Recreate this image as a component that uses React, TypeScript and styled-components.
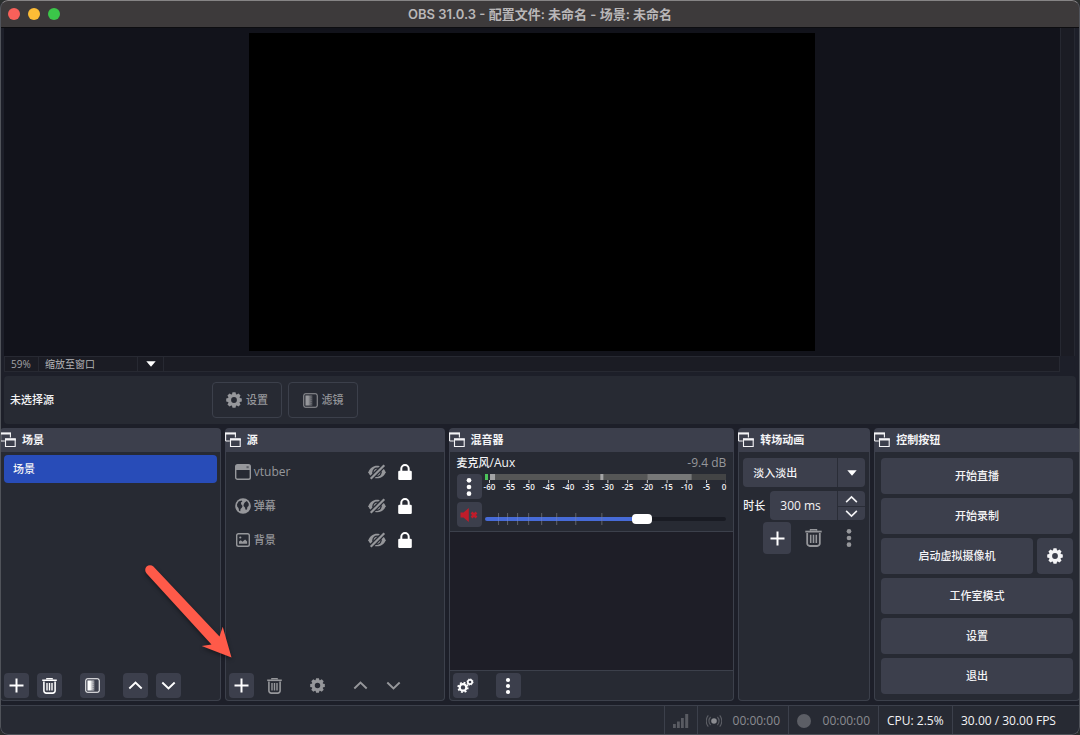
import React, { useState } from "react";
import styled, { createGlobalStyle, css } from "styled-components";

const color = {
  panel: "#272a33",
  deep: "#1d1f29",
  control: "#3c3f4c",
  line: "#3c404b",
  text: "#f4f4f6",
  muted: "#96979b",
  accent: "#284cb8",
};

const GlobalStyle = createGlobalStyle`
  * { box-sizing: border-box; }
  body {
    margin: 0;
    background: #2b2f2e;
    color: ${color.text};
    font-family: "Open Sans", "Noto Sans CJK SC", sans-serif;
    font-size: 12px;
    line-height: 16px;
  }
  button, input, select { font: inherit; color: inherit; margin: 0; }
  svg { display: block; flex: none; }
`;

/* ---------- icons ---------- */

const Gear = ({ size = 16 }: { size?: number }) => (
  <svg width={size} height={size} viewBox="0 0 16 16" aria-hidden="true">
    <circle cx="8" cy="8" r="4.5" fill="none" stroke="currentColor" strokeWidth="3.2" />
    {[0, 45, 90, 135, 180, 225, 270, 315].map((angle) => (
      <path key={angle} d="M5.8 3 6.5.2h3L10.200 3z" fill="currentColor" transform={`rotate(${angle} 8 8)`} />
    ))}
  </svg>
);

const Gears = () => (
  <svg width="17" height="16" viewBox="0 0 17 16" aria-hidden="true">
    <g fill="none" stroke="currentColor">
      <circle cx="6" cy="9.4" r="3.3" strokeWidth="2.2" />
      <circle cx="6" cy="9.4" r="4.8" strokeWidth="1.7" strokeDasharray="1.9 1.87" />
      <circle cx="13" cy="4" r="2.2" strokeWidth="1.7" />
      <circle cx="13" cy="4" r="3.1" strokeWidth="0.9" strokeDasharray="1.22 1.22" />
    </g>
  </svg>
);

const Plus = () => (
  <svg width="15" height="15" viewBox="0 0 15 15" aria-hidden="true">
    <path d="M7.500.500v14M.500 7.500h14" fill="none" stroke="currentColor" strokeWidth="2" />
  </svg>
);

const Trash = ({ size = 15 }: { size?: number }) => (
  <svg width={size} height={size + 1} viewBox="0 0 15 16" aria-hidden="true">
    <g fill="none" stroke="currentColor">
      <path d="M.2 2.300h14.600" strokeWidth="1.600" />
      <path d="M4.800 1.500V.7h5.400v.8" strokeWidth="1.200" />
      <path d="M1.900 3.600v9.200a2.300 2.300 0 0 0 2.300 2.300h6.600a2.300 2.300 0 0 0 2.300-2.300V3.600" strokeWidth="1.600" />
      <path d="M5 5v7.400M7.500 5v7.400M10 5v7.400" strokeWidth="1.400" />
    </g>
  </svg>
);

const FilterIcon = ({ id }: { id: string }) => (
  <svg width="15" height="15" viewBox="0 0 16 16" aria-hidden="true">
    <defs>
      <linearGradient id={id}>
        <stop offset="0.35" stopColor="currentColor" />
        <stop offset="1" stopColor="currentColor" stopOpacity="0" />
      </linearGradient>
    </defs>
    <rect x="0.8" y="0.8" width="14.4" height="14.4" rx="2" fill="none" stroke="currentColor" strokeWidth="1.1" />
    <rect x="2.6" y="2.6" width="8.4" height="10.8" fill={`url(#${id})`} />
    <path d="M8.6 2.6v10.8" stroke="currentColor" strokeDasharray="1 1" strokeOpacity="0.6" />
  </svg>
);

const Chevron = ({ down, size = 16 }: { down?: boolean; size?: number }) => (
  <svg width={size} height={size} viewBox="0 0 16 16" aria-hidden="true">
    <path d={down ? "M1.4 4.8 8 11.2l6.6-6.4" : "M1.4 11.2 8 4.8l6.6 6.4"} fill="none" stroke="currentColor" strokeWidth="2" />
  </svg>
);

const Dots = ({ size = 18 }: { size?: number }) => (
  <svg width={size} height={size} viewBox="0 0 18 18" aria-hidden="true" fill="currentColor">
    <circle cx="9" cy="3" r="2.1" />
    <circle cx="9" cy="9" r="2.1" />
    <circle cx="9" cy="15" r="2.1" />
  </svg>
);

const Caret = () => (
  <svg width="10" height="6" viewBox="0 0 10 6" aria-hidden="true">
    <path d="M.3.300h9.400L5 5.700z" fill="currentColor" />
  </svg>
);

const DockIcon = () => (
  <svg width="16" height="16" viewBox="0 0 16 16" aria-hidden="true">
    <path d="M.6 9V1.200h9.800v4.300M.6 9h4.200" fill="none" stroke="currentColor" strokeWidth="1.100" />
    <path d="M0 .4h11v2H0zM5 6.200h10.800v2.200H5z" fill="currentColor" />
    <path d="M5.500 7.200h9.700v7.300H5.500z" fill="none" stroke="currentColor" strokeWidth="1.100" />
  </svg>
);

const WindowIcon = () => (
  <svg width="16" height="16" viewBox="0 0 16 16" aria-hidden="true">
    <rect x="0.700" y="0.700" width="14.600" height="14.600" rx="1.800" fill="none" stroke="currentColor" strokeWidth="1.400" />
    <path d="M1 1h14v5H1z" fill="currentColor" />
    <path d="M11.500 2.200h2.200v2h-2.200z" fill="#5c5e65" />
  </svg>
);

const GlobeIcon = () => (
  <svg width="16" height="16" viewBox="0 0 16 16" aria-hidden="true">
    <circle cx="8" cy="8" r="7.800" fill="currentColor" />
    <path
      d="M2 6.200 3.600 3.400l2.900-1 .9 1.100-1.500 1.100.3 1.700 1.400 1.700-.8 1.800-1.300 1.200-.2 2.300-1.200-.5-.6-2.900-1.300-1.300zM9.900 4.200l2-1.100 1.900 2.700-.2 2.200-1.200 1.100-.4 2.300-1.400.3-.8-2.500-1.300-1.200.3-2z"
      fill={color.panel}
    />
  </svg>
);

const ImageIcon = () => (
  <svg width="16" height="16" viewBox="0 0 16 16" aria-hidden="true">
    <rect x="1.700" y="1.700" width="12.600" height="12.600" rx="1.800" fill="none" stroke="currentColor" strokeWidth="1.400" />
    <path d="M4 11.800V9.600l1.800-1.400 1.700 1.500 2.600-2.100 2 2v2.200z" fill="currentColor" />
    <circle cx="5.300" cy="5.500" r="1.100" fill="currentColor" />
  </svg>
);

const HiddenIcon = () => (
  <svg width="18" height="16" viewBox="0 0 18 16" aria-hidden="true">
    <path d="M.3 8.200C1.900 4 5.200 1.700 9 1.700s7.100 2.300 8.700 6.500c-1.600 4.100-4.900 6.100-8.700 6.100S1.900 12.300.3 8.200z" fill="currentColor" />
    <circle cx="9" cy="8.200" r="4.700" fill={color.panel} />
    <circle cx="9" cy="8.200" r="2.500" fill="none" stroke="currentColor" strokeWidth="1.700" />
    <path d="M1.600 15.800 16.600.800" stroke={color.panel} strokeWidth="4.800" />
    <path d="M2.700 14.800 16.300 1.200" stroke="currentColor" strokeWidth="2.200" />
  </svg>
);

const LockIcon = () => (
  <svg width="14" height="16" viewBox="0 0 14 16" aria-hidden="true">
    <path d="M3.300 8V4.700a3.700 3.700 0 0 1 7.400 0V8" fill="none" stroke="currentColor" strokeWidth="2" />
    <rect x="0.200" y="6.800" width="13.600" height="9.200" rx="1.200" fill="currentColor" />
  </svg>
);

const MutedIcon = () => (
  <svg width="18" height="16" viewBox="0 0 18 16" aria-hidden="true">
    <path d="M.5 5.600h3L8.800 1v14l-5.300-4.600h-3z" fill="#c01c2a" />
    <path d="m11.500 5.500 5 5M16.500 5.500l-5 5" stroke="#c01c2a" strokeWidth="2.600" />
  </svg>
);

const SignalIcon = () => (
  <svg width="16" height="16" viewBox="0 0 16 16" aria-hidden="true" fill="#595b62">
    <path d="M0 11h2.800v4H0zM4 8.500h2.800V15H4zM8 5h2.800v10H8zM12.200 1H15.200v14h-3z" />
  </svg>
);

const BroadcastIcon = () => (
  <svg width="16" height="14" viewBox="0 0 16 14" aria-hidden="true">
    <circle cx="8" cy="7" r="2.800" fill="#8b8c91" />
    <path d="M4.600 3a5.600 5.600 0 0 0 0 8M11.400 3a5.600 5.600 0 0 1 0 8M2.300 1.400a8.600 8.600 0 0 0 0 11.200M13.700 1.400a8.600 8.600 0 0 1 0 11.200" fill="none" stroke="#5c5e65" strokeWidth="1.100" />
  </svg>
);

/* ---------- window frame ---------- */

const Window = styled.div`
  position: relative;
  display: flex;
  flex-direction: column;
  min-height: 100vh;
  border-radius: 8px;
  overflow: hidden;
  background: ${color.deep};

  &::after {
    content: "";
    position: absolute;
    inset: 0;
    border: 1px solid #50535a;
    border-top-color: #868485;
    border-radius: 8px;
    pointer-events: none;
  }
`;

const TitleBar = styled.header`
  display: flex;
  align-items: center;
  height: 28px;
  padding: 0 8px;
  background: #3d3a3b;
  border-bottom: 1px solid #0d0d10;
`;

const Lights = styled.div`
  display: flex;
  flex: 1;
  gap: 8px;
`;

const Light = styled.button<{ $tint: string }>`
  width: 12px;
  height: 12px;
  padding: 0;
  border: 0;
  border-radius: 50%;
  background: ${(p) => p.$tint};
`;

const Title = styled.h1`
  margin: 0;
  font: 600 13px/16px Inter, "Noto Sans CJK SC", sans-serif;
  color: #b9b7b8;
`;

const Spacer = styled.div`
  flex: 1;
`;

/* ---------- preview ---------- */

const PreviewArea = styled.main`
  display: grid;
  grid-template-columns: 1fr 15px;
  grid-template-rows: 1fr 16px;
  flex: 1;
  min-height: 240px;
  padding: 0 5px 4px 4px;
`;

const Stage = styled.div`
  display: flex;
  justify-content: center;
  padding: 5px 0;
  background: #12131b;
`;

const Canvas = styled.div`
  height: 100%;
  aspect-ratio: 16 / 9;
  background: #000;
`;

const ScrollTrack = styled.div`
  grid-row: 1;
  grid-column: 2;
  background: #1b1c24;
  border-left: 1px solid #262831;
  border-right: 1px solid #262831;
`;

const ZoomBar = styled.div`
  display: flex;
  background: #1b1c24;
  border: 1px solid #272932;
  color: #a3a3a7;
`;

const ZoomValue = styled.span`
  width: 34px;
  padding-left: 6px;
  border-right: 1px solid #272932;
  font-size: 10px;
  line-height: 14px;
`;

const SelectBox = styled.div`
  position: relative;
  display: flex;

  svg {
    position: absolute;
    top: 50%;
    transform: translateY(-50%);
    color: #fff;
    pointer-events: none;
  }
`;

const ZoomSelectBox = styled(SelectBox)`
  width: 125px;
  border-right: 1px solid #272932;
  svg { right: 7px; }
`;

const ZoomSelect = styled.select`
  appearance: none;
  width: 100%;
  padding: 0 0 0 6px;
  border: 0;
  background: linear-gradient(#272932, #272932) right 25px top / 1px 100% no-repeat;
  font-size: 10px;
  line-height: 14px;
  color: #b4b4b7;
`;

const ContextBar = styled.section`
  display: flex;
  align-items: center;
  gap: 6px;
  height: 48px;
  margin: 0 4px 4px;
  padding: 0 6px;
  border-radius: 4px;
  background: ${color.panel};
`;

const ContextLabel = styled.span`
  width: 196px;
  font-size: 11px;
  font-weight: 500;
`;

const OutlineButton = styled.button`
  display: flex;
  align-items: center;
  justify-content: center;
  gap: 4px;
  width: 70px;
  height: 36px;
  padding: 0;
  border: 1px solid ${color.line};
  border-radius: 4px;
  background: transparent;
  font-size: 11px;
  font-weight: 500;
  color: ${color.muted};
`;

/* ---------- docks ---------- */

const Docks = styled.div`
  display: grid;
  grid-template-columns: 221fr 220fr 286fr 132fr 206fr;
  gap: 4px;
`;

const DockFrame = styled.section`
  position: relative;
  display: flex;
  flex-direction: column;
  min-width: 0;
`;

const DockTitle = styled.h2`
  display: flex;
  align-items: center;
  gap: 6px;
  height: 24px;
  margin: 0;
  border-radius: 4px 4px 0 0;
  background: ${color.control};
  font-size: 11px;
  font-weight: 700;
`;

const DockBody = styled.div`
  display: flex;
  flex: 1;
  flex-direction: column;
  border: 1px solid ${color.line};
  border-top: 0;
  border-radius: 0 0 4px 4px;
  background: ${color.panel};
`;

const Dock = ({ title, children, overlay }: { title: string; children: React.ReactNode; overlay?: React.ReactNode }) => (
  <DockFrame>
    <DockTitle>
      <DockIcon />
      {title}
    </DockTitle>
    <DockBody>{children}</DockBody>
    {overlay}
  </DockFrame>
);

const List = styled.ul`
  flex: 1;
  margin: 0;
  padding: 3px;
  list-style: none;
`;

const SceneItem = styled.li`
  height: 28px;
  padding-left: 9px;
  border-radius: 4px;
  background: ${color.accent};
  font-size: 11px;
  font-weight: 500;
  line-height: 28px;
`;

const SourceItem = styled.li`
  display: flex;
  align-items: center;
  height: 34px;
  padding: 0 29px 0 6px;
  color: ${color.muted};
`;

const SourceName = styled.span<{ $latin?: boolean }>`
  flex: 1;
  padding-left: 3px;
  font-size: ${(p) => (p.$latin ? 12 : 11)}px;
  font-weight: ${(p) => (p.$latin ? 400 : 500)};
`;

const BareButton = styled.button<{ $bright?: boolean }>`
  display: flex;
  padding: 0;
  margin-left: 12px;
  border: 0;
  background: none;
  color: ${(p) => (p.$bright ? "#fff" : color.muted)};
`;

const Toolbar = styled.div`
  display: flex;
  gap: 18px;
  padding: 2px 3px;
`;

const ToolGroup = styled.div`
  display: flex;
  gap: 8px;
`;

const IconButton = styled.button<{ $flat?: boolean; $large?: boolean }>`
  display: flex;
  align-items: center;
  justify-content: center;
  width: 25px;
  height: 25px;
  padding: 0;
  border: 0;
  border-radius: 4px;
  background: ${color.control};
  color: #fff;
  ${(p) => p.$large && css`width: 28px; height: 32px;`}
  ${(p) => p.$flat && css`background: transparent; color: ${color.muted};`}
`;

const Pointer = styled.svg`
  position: absolute;
  left: -82px;
  bottom: 36px;
  z-index: 2;
  filter: drop-shadow(0 2px 2px rgba(0, 0, 0, 0.4));
  pointer-events: none;
`;

/* ---------- mixer ---------- */

const Channel = styled.div`
  padding: 3px 7px 4px;
  border-bottom: 1px solid ${color.line};
`;

const ChannelHead = styled.div`
  display: flex;
  justify-content: space-between;
`;

const ChannelName = styled.span`
  font-weight: 500;
`;

const Cjk = styled.span`
  font-size: 11px;
`;

const Level = styled.span`
  color: ${color.muted};
`;

const ChannelRow = styled.div`
  display: flex;
  gap: 3px;
  margin-top: 3px;
`;

const MeterColumn = styled.div`
  flex: 1;
  min-width: 0;
`;

const MeterScale = styled.div`
  display: flex;
  margin: -1px 0 0 -5px;
  font-size: 8px;
  font-weight: 600;
  line-height: 10px;
`;

const ScaleMark = styled.span`
  flex: 1;
  text-align: center;

  &:last-child {
    flex: 0 0 10px;
    text-align: right;
  }
`;

const VolumeBox = styled.div`
  position: relative;
  display: flex;
  align-items: flex-end;
  height: 25px;
  padding-bottom: 3px;

  svg {
    position: absolute;
    left: 0;
    bottom: 2px;
    width: 100%;
    pointer-events: none;
  }
`;

const Volume = styled.input`
  appearance: none;
  width: 100%;
  height: 10px;
  background: transparent;

  &::-webkit-slider-runnable-track {
    height: 4px;
    border-radius: 2px;
    background: linear-gradient(
      90deg,
      #476bd7 var(--level),
      #191b23 var(--level)
    );
  }

  &::-webkit-slider-thumb {
    appearance: none;
    width: 20px;
    height: 10px;
    margin-top: -3px;
    border-radius: 4px;
    background: #fff;
  }
`;

const MixerVoid = styled.div`
  flex: 1;
  background: #1e1e27;
  border-bottom: 1px solid ${color.line};
`;

/* ---------- transitions ---------- */

const TransitionForm = styled.div`
  display: flex;
  flex-direction: column;
  gap: 4px;
  padding: 6px 4px;
`;

const FieldRow = styled.div`
  display: flex;
  align-items: center;
  gap: 5px;
  font-size: 11px;
  font-weight: 500;
`;

const TransitionSelectBox = styled(SelectBox)`
  svg { right: 8px; }
`;

const TransitionSelect = styled.select`
  appearance: none;
  width: 100%;
  height: 29px;
  padding: 0 28px 0 10px;
  border: 0;
  border-radius: 4px;
  background: linear-gradient(#2a2d37, #2a2d37) right 27px top / 1px 100% no-repeat ${color.control};
  font-size: 11px;
  font-weight: 500;
`;

const Spin = styled.div`
  display: flex;
  flex: 1;
  min-width: 0;
  height: 29px;
  border-radius: 4px;
  background: ${color.control};
  overflow: hidden;
`;

const SpinInput = styled.input`
  flex: 1;
  min-width: 0;
  padding: 0 0 0 10px;
  border: 0;
  background: transparent;
  font-size: 12px;
`;

const SpinButtons = styled.div`
  display: grid;
  grid-template-rows: 1fr 1fr;
  width: 28px;
  border-left: 1px solid #2a2d37;
`;

const SpinButton = styled.button`
  display: flex;
  align-items: flex-end;
  justify-content: center;
  padding: 0;
  border: 0;
  background: transparent;

  & + & {
    align-items: flex-start;
    border-top: 1px solid #2a2d37;
  }
`;

const TransitionTools = styled.div`
  display: flex;
  justify-content: flex-end;
  gap: 8px;
  margin-top: -2px;
  padding-right: 2px;
`;

/* ---------- controls ---------- */

const ControlStack = styled.div`
  display: flex;
  flex-direction: column;
  gap: 4px;
  padding: 6px;
`;

const ControlRow = styled.div`
  display: flex;
  gap: 4px;
`;

const ControlButton = styled.button<{ $square?: boolean }>`
  display: flex;
  flex: ${(p) => (p.$square ? "0 0 36px" : "1")};
  align-items: center;
  justify-content: center;
  height: 36px;
  padding: 0;
  border: 0;
  border-radius: 4px;
  background: ${color.control};
  font-size: 11px;
  font-weight: 500;
`;

/* ---------- status bar ---------- */

const StatusBar = styled.footer`
  display: flex;
  justify-content: flex-end;
  height: 30px;
  margin-top: 4px;
  border-top: 1px solid ${color.line};
  background: ${color.panel};
`;

const StatusCell = styled.div<{ $dim?: boolean; $width: number }>`
  display: flex;
  align-items: center;
  justify-content: space-between;
  width: ${(p) => p.$width}px;
  padding: 0 8px;
  border-left: 1px solid ${color.line};
  color: ${(p) => (p.$dim ? "#8b8c91" : color.text)};
  white-space: nowrap;
`;

const RecordDot = styled.i`
  width: 14px;
  height: 14px;
  border-radius: 50%;
  background: #5c5e65;
`;

/* ---------- data ---------- */

const sources = [
  { name: "vtuber", icon: <WindowIcon />, latin: true },
  { name: "弹幕", icon: <GlobeIcon /> },
  { name: "背景", icon: <ImageIcon /> },
];

const marks = [-60, -55, -50, -45, -40, -35, -30, -25, -20, -15, -10, -5, 0];
const volumeTicks = [13, 22, 32, 43, 56, 71, 90, 116];

const Meter = () => (
  <svg width="100%" height="9" viewBox="0 0 241 9" preserveAspectRatio="none" aria-hidden="true">
    <path fill="#555656" d="M5 0h201v6H5z" />
    <path fill="#434445" d="M206 0h35v6h-35z" />
    <path fill="#777878" d="M162 0h44v6h-44z" />
    <path fill="#a3a4a5" d="M5 0h5v6H5zM115 0h3v6h-3z" />
    <path fill="#4cc35a" d="M0 0h3v6H0z" />
    {marks.map((mark, i) => (
      <rect key={mark} x={Math.min(4 + i * 19.67, 240)} y="6" width="1" height="3" fill="#c9cacc" />
    ))}
  </svg>
);

const VolumeTicks = () => (
  <svg height="12" viewBox="0 0 241 12" preserveAspectRatio="none" aria-hidden="true">
    {volumeTicks.map((x) => (
      <g key={x}>
        <rect x={x} y="0" width="1" height="12" fill="#5e6069" />
        <rect x={x} y="4" width="1" height="4" fill="#5c7be0" />
      </g>
    ))}
  </svg>
);

export default function App() {
  const [volume, setVolume] = useState(667);
  const [duration, setDuration] = useState("300 ms");

  return (
    <>
      <GlobalStyle />
      <Window>
        <TitleBar>
          <Lights>
            <Light $tint="#f9605a" aria-label="关闭" />
            <Light $tint="#fdbc36" aria-label="最小化" />
            <Light $tint="#3bc649" aria-label="缩放" />
          </Lights>
          <Title>OBS 31.0.3 - 配置文件: 未命名 - 场景: 未命名</Title>
          <Spacer />
        </TitleBar>

        <PreviewArea>
          <Stage>
            <Canvas />
          </Stage>
          <ScrollTrack />
          <ZoomBar>
            <ZoomValue>59%</ZoomValue>
            <ZoomSelectBox>
              <ZoomSelect aria-label="预览缩放">
                <option>缩放至窗口</option>
              </ZoomSelect>
              <Caret />
            </ZoomSelectBox>
          </ZoomBar>
        </PreviewArea>

        <ContextBar>
          <ContextLabel>未选择源</ContextLabel>
          <OutlineButton>
            <Gear />
            设置
          </OutlineButton>
          <OutlineButton>
            <FilterIcon id="context-filter" />
            滤镜
          </OutlineButton>
        </ContextBar>

        <Docks>
          <Dock title="场景">
            <List>
              <SceneItem>场景</SceneItem>
            </List>
            <Toolbar>
              <ToolGroup>
                <IconButton aria-label="添加场景"><Plus /></IconButton>
                <IconButton aria-label="删除场景"><Trash /></IconButton>
              </ToolGroup>
              <IconButton aria-label="场景滤镜"><FilterIcon id="scene-filter" /></IconButton>
              <ToolGroup>
                <IconButton aria-label="上移场景"><Chevron size={15} /></IconButton>
                <IconButton aria-label="下移场景"><Chevron down size={15} /></IconButton>
              </ToolGroup>
            </Toolbar>
          </Dock>

          <Dock
            title="源"
            overlay={
              <Pointer width="96" height="102" viewBox="0 0 96 102" aria-hidden="true">
                <path
                  d="M10.400 3.600 76.500 73.500 79.700 63.700 88.500 94.500 58.700 83 68.500 81.500 3.600 10.400A4.800 4.800 0 0 1 10.400 3.600z"
                  fill="#ff5a49"
                />
              </Pointer>
            }
          >
            <List>
              {sources.map((source) => (
                <SourceItem key={source.name}>
                  {source.icon}
                  <SourceName $latin={source.latin}>{source.name}</SourceName>
                  <BareButton aria-label="显示"><HiddenIcon /></BareButton>
                  <BareButton $bright aria-label="解锁"><LockIcon /></BareButton>
                </SourceItem>
              ))}
            </List>
            <Toolbar>
              <ToolGroup>
                <IconButton aria-label="添加源"><Plus /></IconButton>
                <IconButton $flat aria-label="删除源"><Trash /></IconButton>
              </ToolGroup>
              <IconButton $flat aria-label="源属性"><Gear size={15} /></IconButton>
              <ToolGroup>
                <IconButton $flat aria-label="上移源"><Chevron size={15} /></IconButton>
                <IconButton $flat aria-label="下移源"><Chevron down size={15} /></IconButton>
              </ToolGroup>
            </Toolbar>
          </Dock>

          <Dock title="混音器">
            <Channel>
              <ChannelHead>
                <ChannelName><Cjk>麦克风</Cjk>/Aux</ChannelName>
                <Level>-9.4 dB</Level>
              </ChannelHead>
              <ChannelRow>
                <div>
                  <IconButton aria-label="音频选项"><Dots size={20} /></IconButton>
                </div>
                <MeterColumn>
                  <Meter />
                  <MeterScale>
                    {marks.map((mark) => (
                      <ScaleMark key={mark}>{mark}</ScaleMark>
                    ))}
                  </MeterScale>
                </MeterColumn>
              </ChannelRow>
              <ChannelRow>
                <IconButton aria-label="取消静音"><MutedIcon /></IconButton>
                <MeterColumn>
                  <VolumeBox>
                    <VolumeTicks />
                    <Volume
                      type="range"
                      min="0"
                      max="1000"
                      aria-label="音量"
                      value={volume}
                      onChange={(e) => setVolume(Number(e.target.value))}
                      style={{ "--level": `${volume / 10}%` } as React.CSSProperties}
                    />
                  </VolumeBox>
                </MeterColumn>
              </ChannelRow>
            </Channel>
            <MixerVoid />
            <Toolbar>
              <IconButton aria-label="高级音频属性"><Gears /></IconButton>
              <IconButton aria-label="混音器菜单"><Dots /></IconButton>
            </Toolbar>
          </Dock>

          <Dock title="转场动画">
            <TransitionForm>
              <TransitionSelectBox>
                <TransitionSelect aria-label="转场动画">
                  <option>淡入淡出</option>
                </TransitionSelect>
                <Caret />
              </TransitionSelectBox>
              <FieldRow>
                <label htmlFor="duration">时长</label>
                <Spin>
                  <SpinInput id="duration" value={duration} onChange={(e) => setDuration(e.target.value)} />
                  <SpinButtons>
                    <SpinButton aria-label="增加"><Chevron size={13} /></SpinButton>
                    <SpinButton aria-label="减少"><Chevron down size={13} /></SpinButton>
                  </SpinButtons>
                </Spin>
              </FieldRow>
              <TransitionTools>
                <IconButton $large aria-label="添加转场"><Plus /></IconButton>
                <IconButton $large $flat aria-label="删除转场"><Trash size={17} /></IconButton>
                <IconButton $large $flat aria-label="转场属性"><Dots size={20} /></IconButton>
              </TransitionTools>
            </TransitionForm>
          </Dock>

          <Dock title="控制按钮">
            <ControlStack>
              <ControlRow><ControlButton>开始直播</ControlButton></ControlRow>
              <ControlRow><ControlButton>开始录制</ControlButton></ControlRow>
              <ControlRow>
                <ControlButton>启动虚拟摄像机</ControlButton>
                <ControlButton $square aria-label="虚拟摄像机设置"><Gear /></ControlButton>
              </ControlRow>
              <ControlRow><ControlButton>工作室模式</ControlButton></ControlRow>
              <ControlRow><ControlButton>设置</ControlButton></ControlRow>
              <ControlRow><ControlButton>退出</ControlButton></ControlRow>
            </ControlStack>
          </Dock>
        </Docks>

        <StatusBar>
          <StatusCell $dim $width={33}><SignalIcon /></StatusCell>
          <StatusCell $dim $width={91}><BroadcastIcon />00:00:00</StatusCell>
          <StatusCell $dim $width={90}><RecordDot />00:00:00</StatusCell>
          <StatusCell $width={74}>CPU: 2.5%</StatusCell>
          <StatusCell $width={128}>30.00 / 30.00 FPS</StatusCell>
        </StatusBar>
      </Window>
    </>
  );
}
